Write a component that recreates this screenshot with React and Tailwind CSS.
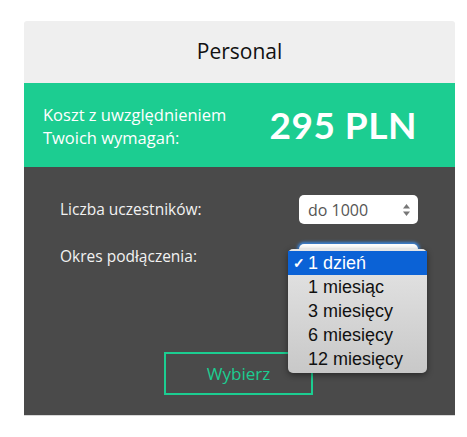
import React from 'react';

const options = ['1 dzień', '1 miesiąc', '3 miesięcy', '6 miesięcy', '12 miesięcy'];

const PlanCard = () => {
    return (
        <div className="min-h-screen bg-white pt-[21px] pl-[24px]" style={{ fontFamily: '"Open Sans", sans-serif' }}>
            <div className="w-[431px] rounded-t-[3px] overflow-visible">
                <div className="h-[62px] bg-[#efefef] rounded-t-[3px] flex items-center justify-center">
                    <h2 className="text-[21px] text-[#111]">Personal</h2>
                </div>
                <div className="h-[84px] bg-[#1ccd91] flex items-center justify-between pl-[19px] pr-[38px]">
                    <p className="text-white text-[16.5px] leading-[23px] pt-[1px]">
                        Koszt z uwzględnieniem<br />Twoich wymagań:
                    </p>
                    <span className="text-white font-bold text-[37px] tracking-[0.5px]" style={{ fontFamily: 'Lato, sans-serif' }}>295 PLN</span>
                </div>
                <div className="relative h-[249px] bg-[#4a4a4a] border-b border-[#d8d8d8] px-[36px] pt-[28px]">
                    <div className="flex items-center justify-between pr-[1px]">
                        <span className="text-[#f2f2f2] text-[15.5px]">Liczba uczestników:</span>
                        <div className="w-[119px] h-[29px] bg-white rounded-[5px] flex items-center justify-between pl-[9px] pr-[7px]">
                            <span className="text-[#555] text-[16px]">do 1000</span>
                            <svg width="9" height="14" viewBox="0 0 9 14">
                                <path d="M4.5 1 L8 5.5 H1 Z" fill="#777" />
                                <path d="M4.5 13 L8 8.5 H1 Z" fill="#777" />
                            </svg>
                        </div>
                    </div>
                    <div className="flex items-center justify-between mt-[20px] pr-[1px]">
                        <span className="text-[#f2f2f2] text-[15.5px] -mt-[4px]">Okres podłączenia:</span>
                        <div className="w-[119px] h-[29px] bg-white rounded-[5px] shadow-[0_0_3px_2px_#3b82d6]" />
                    </div>
                    <div className="absolute left-[140px] top-[185px] w-[149px] h-[43px] border-2 border-[#1ccd91] flex items-center justify-center">
                        <span className="text-[#1ccd91] text-[17px]">Wybierz</span>
                    </div>
                    <ul
                        className="absolute left-[264px] top-[82px] w-[139px] py-[2px] rounded-[5px] bg-gradient-to-b from-[#e6e6e6] to-[#c8c8c8] shadow-[0_2px_6px_rgba(0,0,0,0.45)]"
                        style={{ fontFamily: '"Liberation Sans", Arial, sans-serif' }}
                    >
                        {options.map((opt, i) => (
                            <li
                                key={opt}
                                className={`h-[24px] flex items-center text-[18px] pl-[20px] relative ${i === 0 ? 'bg-[#0b62d6] text-white' : 'text-[#111]'}`}
                            >
                                {i === 0 && <span className="absolute left-[5px] text-[14px] font-bold">✓</span>}
                                {opt}
                            </li>
                        ))}
                    </ul>
                </div>
            </div>
        </div>
    );
};

export default PlanCard;
